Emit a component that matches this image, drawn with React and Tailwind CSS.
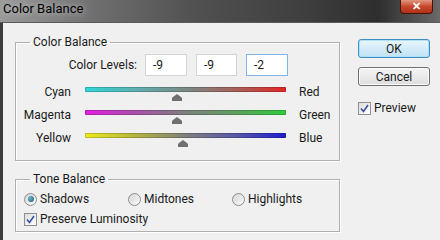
import React from "react";

const font = { fontFamily: "Roboto, 'Liberation Sans', sans-serif" };

function Thumb() {
  return (
    <svg width="10" height="7" viewBox="0 0 10 7" className="block">
      <path d="M5 0 L9 3 L10 4 L10 7 L0 7 L0 4 L1 3 Z" fill="#707070" />
    </svg>
  );
}

function SliderRow({ left, right, gradient, thumb }) {
  return (
    <div className="flex h-[23px] items-start">
      <div className="w-[55px] text-right leading-[16px]">{left}</div>
      <div className="ml-[14px] w-[201px] pt-[3px]">
        <div className={`h-[5px] w-full rounded-[1px] shadow-[inset_0_0_0_1px_rgba(0,0,0,0.18)] ${gradient}`} />
        <div className="mt-[2px] flex">
          <div style={{ width: thumb }} />
          <Thumb />
        </div>
      </div>
      <div className="ml-[13px] leading-[16px]">{right}</div>
    </div>
  );
}

function Check() {
  return (
    <span className="flex h-[13px] w-[13px] items-center justify-center border border-[#8e8f8f] bg-[linear-gradient(135deg,#dcdcdc,#fff)]">
      <svg width="9" height="9" viewBox="0 0 9 9">
        <path d="M1 4.5 L3.5 7.5 L8 1" fill="none" stroke="#3a4fa0" strokeWidth="1.6" />
      </svg>
    </span>
  );
}

function Radio({ checked }) {
  return (
    <span className="flex h-[13px] w-[13px] items-center justify-center rounded-full border border-[#8e8f8f] bg-[linear-gradient(135deg,#d6d6d6,#fafafa)]">
      {checked && <span className="h-[6px] w-[6px] rounded-full bg-[radial-gradient(circle_at_35%_35%,#6ab4d0,#1f5a72)]" />}
    </span>
  );
}

export default function App() {
  return (
    <div className="h-[240px] w-[440px] overflow-hidden bg-[#f0f0f0] text-[12px] text-[#1a1a1a]" style={font}>
      <div className="flex h-[23px] items-start justify-between border-b border-b-[#5a5a5a] bg-[linear-gradient(to_right,#9a9a9a_0%,#6e6e6e_22%,#505050_45%,#3e3e3e_70%,#2e2e2e_86%,#6a6a6a_100%)]">
        <div className="pl-[3px] pt-[1px] text-[13px] leading-[16px] text-black [text-shadow:0_0_6px_#d0d0d0]">Color Balance</div>
        <div className="mr-[7px] flex h-[14px] w-[33px] items-center justify-center rounded-b-[4px] border border-t-0 border-[#4a1408] bg-[linear-gradient(#e09880,#c8482c_50%,#b0301a)] text-[11px] font-bold leading-none text-white">
          ✕
        </div>
      </div>
      <div className="flex h-[217px] border-l-[3px] border-l-[#3c3c3c] pl-[12px] pt-[11px]">
        <div className="w-[325px]">
          <fieldset className="border border-[#b0b0b0] px-0 pb-[7px] pt-[4px] shadow-[inset_1px_1px_0_#fff,1px_1px_0_#fff]">
            <legend className="ml-[14px] px-[3px] leading-[16px]">Color Balance</legend>
            <div className="flex items-center">
              <div className="w-[121px] text-right">Color Levels:</div>
              <div className="ml-[8px] flex h-[22px] w-[42px] items-center border border-[#d4d4d4] bg-white pl-[7px]">-9</div>
              <div className="ml-[9px] flex h-[22px] w-[41px] items-center border border-[#d4d4d4] bg-white pl-[7px]">-9</div>
              <div className="ml-[9px] flex h-[22px] w-[42px] items-center border border-[#84b4e4] bg-white pl-[7px]">-2</div>
            </div>
            <div className="mt-[8px]">
              <SliderRow left="Cyan" right="Red" thumb={87} gradient="bg-[linear-gradient(to_right,#2fd6da,#5fb0b0_25%,#7a8a86_50%,#a86058_75%,#e42626)]" />
              <SliderRow left="Magenta" right="Green" thumb={87} gradient="bg-[linear-gradient(to_right,#e41ee4,#a850a8_25%,#7e807e_50%,#60a060_75%,#2ecc3a)]" />
              <SliderRow left="Yellow" right="Blue" thumb={93} gradient="bg-[linear-gradient(to_right,#ecec1e,#b4b440_25%,#80807e_50%,#5858a8_75%,#1e1ed0)]" />
            </div>
          </fieldset>
          <fieldset className="mt-[10px] border border-[#b0b0b0] pb-[4px] pt-[4px] shadow-[inset_1px_1px_0_#fff,1px_1px_0_#fff]">
            <legend className="ml-[14px] px-[3px] leading-[16px]">Tone Balance</legend>
            <div className="grid grid-cols-[104px_104px_104px] pl-[8px] leading-[16px]">
              <div className="flex items-center gap-[3px]"><Radio checked /> <span>Shadows</span></div>
              <div className="flex items-center gap-[3px]"><Radio /> <span>Midtones</span></div>
              <div className="flex items-center gap-[3px]"><Radio /> <span>Highlights</span></div>
            </div>
            <div className="mt-[4px] flex items-center gap-[3px] pl-[8px] leading-[16px]">
              <Check />
              <span>Preserve Luminosity</span>
            </div>
          </fieldset>
        </div>
        <div className="ml-[18px] flex w-[72px] flex-col pt-[5px]">
          <div className="flex h-[19px] items-center justify-center rounded-[3px] border border-[#3c8fc4] bg-[linear-gradient(#eaf6fc,#d4ecf8_50%,#bfe2f4)] shadow-[inset_0_0_0_1px_#aee0f8]">OK</div>
          <div className="mt-[9px] flex h-[19px] items-center justify-center rounded-[3px] border border-[#707070] bg-[linear-gradient(#f4f4f4,#ebebeb_50%,#dcdcdc)] shadow-[inset_0_0_0_1px_#fcfcfc]">Cancel</div>
          <div className="mt-[14px] flex items-center gap-[3px] leading-[16px]">
            <Check />
            <span>Preview</span>
          </div>
        </div>
      </div>
    </div>
  );
}
